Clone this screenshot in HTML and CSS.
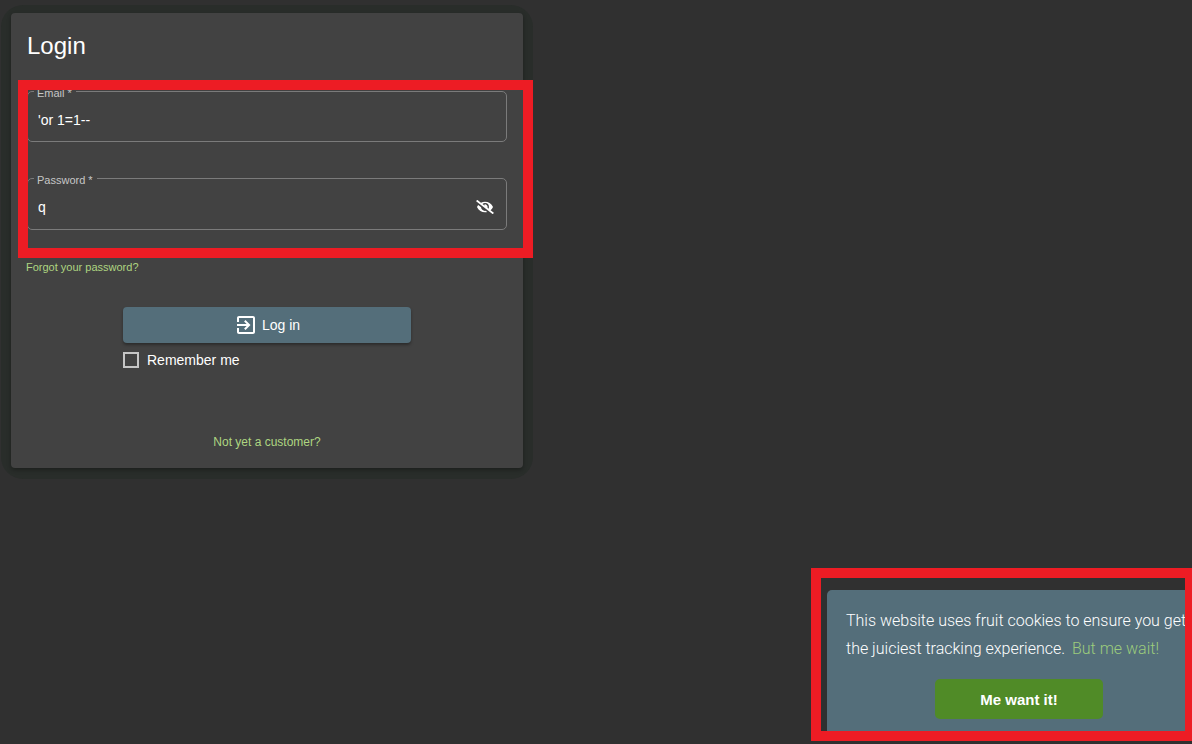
FILE: index.html
```html
<!DOCTYPE html>
<html lang="en">
<head>
  <meta charset="utf-8">
  <meta name="viewport" content="width=device-width, initial-scale=1">
  <title>Login</title>
  <link rel="stylesheet" href="styles.css">
</head>
<body>
  <main class="page">
    <div class="halo">
      <form class="card">
        <h1 class="title">Login</h1>
        <div class="fields">
          <fieldset class="field">
            <legend class="field-legend"><label for="email">Email *</label></legend>
            <input class="field-input" id="email" type="text" value="'or 1=1--">
          </fieldset>
          <fieldset class="field">
            <legend class="field-legend"><label for="password">Password *</label></legend>
            <div class="field-row">
              <input class="field-input" id="password" type="text" value="q">
              <button class="icon-button" type="button" aria-label="Hide password">
                <svg class="eye" viewBox="0 0 640 512" aria-hidden="true"><path d="M320 400c-75.850 0-137.250-58.710-142.900-133.110L72.200 185.820c-13.790 17.300-26.480 35.590-36.720 55.590a32.350 32.350 0 0 0 0 29.190C89.710 376.410 197.070 448 320 448c26.910 0 52.870-4 77.890-10.460L346 397.390a144.130 144.130 0 0 1-26 2.610zm313.820 58.100l-110.550-85.440a331.250 331.250 0 0 0 81.250-102.070 32.350 32.350 0 0 0 0-29.190C550.290 135.590 442.930 64 320 64a308.150 308.150 0 0 0-147.320 37.700L45.460 3.370A16 16 0 0 0 23 6.180L3.370 31.450A16 16 0 0 0 6.180 53.900l588.360 454.730a16 16 0 0 0 22.460-2.810l19.640-25.270a16 16 0 0 0-2.820-22.450zm-183.720-142l-39.300-30.380A94.750 94.750 0 0 0 416 256a94.760 94.760 0 0 0-121.310-92.210A47.650 47.650 0 0 1 304 192a46.640 46.640 0 0 1-1.540 10l-73.610-56.890A142.310 142.310 0 0 1 320 112a143.920 143.920 0 0 1 144 144c0 21.630-5.290 41.790-13.900 60.110z"/></svg>
              </button>
            </div>
          </fieldset>
        </div>
        <a class="link link-forgot" href="#">Forgot your password?</a>
        <div class="actions">
          <button class="login-button" type="submit">
            <svg class="login-icon" viewBox="0 0 24 24" aria-hidden="true"><path d="M10.090 15.590L11.500 17l5-5-5-5-1.410 1.410L12.670 11H3v2h9.670l-2.580 2.590zM19 3H5c-1.110 0-2 .9-2 2v4h2V5h14v14H5v-4H3v4c0 1.100.89 2 2 2h14c1.100 0 2-.9 2-2V5c0-1.100-.9-2-2-2z"/></svg>
            <span>Log in</span>
          </button>
          <label class="remember"><input class="checkbox" type="checkbox">Remember me</label>
        </div>
        <a class="link link-signup" href="#">Not yet a customer?</a>
      </form>
    </div>
  </main>
  <aside class="cookie-area">
    <div class="cookie">
      <p class="cookie-text">This website uses fruit cookies to ensure you get the juiciest tracking experience. <a class="cookie-link" href="#">But me wait!</a></p>
      <button class="cookie-button" type="button">Me want it!</button>
    </div>
  </aside>
</body>
</html>
```
FILE: styles.css
```css
* {
  box-sizing: border-box;
}

body {
  margin: 0;
  min-height: 100vh;
  overflow: hidden;
  background: #303030;
  color: #fff;
  font-family: "Liberation Sans", Arial, sans-serif;
  font-size: 14px;
}

button,
input {
  font: inherit;
  color: inherit;
}

.page {
  padding: 5px 1px;
}

.halo {
  max-width: 532px;
  padding: 8px 10px 11px;
  border-radius: 22px;
  background: #292d2a;
}

.card {
  display: flex;
  flex-direction: column;
  padding: 17px 16px;
  border-radius: 4px;
  background: #424242;
  box-shadow: 0 2px 4px rgba(0, 0, 0, 0.3);
}

.title {
  margin: 0;
  font-size: 24px;
  font-weight: 400;
  line-height: 32px;
}

.fields {
  position: relative;
  display: flex;
  flex-direction: column;
  gap: 27px;
  padding: 20px 0 28px;
}

/* Red highlight frame around the credentials */
.fields::after {
  content: "";
  position: absolute;
  inset: 18px -26px 0 -9px;
  border: 10px solid #ed1c24;
  pointer-events: none;
}

.field {
  min-width: 0;
  margin: 0;
  padding: 0;
  border: 1px solid #7b7b7b;
  border-radius: 5px;
}

.field-legend {
  margin-left: 6px;
  padding: 5px 4px 0 3px;
  color: #c6c6c6;
  font-size: 11px;
  line-height: 13px;
}

.field-row {
  display: flex;
  align-items: center;
  padding-bottom: 1px;
}

.field-input {
  display: block;
  width: 100%;
  height: 41px;
  padding: 0 10px 2px;
  border: 0;
  outline: 0;
  background: none;
}

.icon-button {
  display: flex;
  flex: none;
  margin-right: 12px;
  padding: 0 0 2px;
  border: 0;
  background: none;
}

.eye {
  width: 18px;
  height: 14px;
  fill: #fff;
}

.link {
  color: #aed581;
  text-decoration: none;
}

.link-forgot {
  align-self: flex-start;
  margin-left: -1px;
  font-size: 11px;
  line-height: 18px;
}

.actions {
  display: flex;
  flex-direction: column;
  gap: 8px;
  width: 60%;
  margin: 31px auto 0;
}

.login-button {
  display: flex;
  align-items: center;
  justify-content: center;
  gap: 4px;
  height: 36px;
  padding: 0;
  border: 0;
  border-radius: 4px;
  background: #546e7a;
  box-shadow: 0 2px 3px rgba(0, 0, 0, 0.35);
}

.login-icon {
  width: 24px;
  height: 24px;
  fill: #fff;
}

.remember {
  display: flex;
  align-items: center;
  gap: 8px;
  line-height: 18px;
}

.checkbox {
  appearance: none;
  width: 16px;
  height: 16px;
  margin: 0;
  border: 2px solid #c6c6c6;
}

.link-signup {
  align-self: center;
  margin-top: 64px;
  font-size: 12px;
  line-height: 18px;
}

/* The banner runs past the right edge of the window */
.cookie-area {
  position: fixed;
  right: -19px;
  bottom: 3px;
  width: 384px;
}

/* Red highlight frame around the cookie banner */
.cookie-area::after {
  content: "";
  position: absolute;
  inset: -22px 16px 0 -16px;
  border: 10px solid #ed1c24;
  pointer-events: none;
}

.cookie {
  display: flex;
  flex-direction: column;
  align-items: center;
  gap: 16px;
  padding: 17px 19px 22px;
  border-radius: 5px 5px 0 0;
  background: #546e7a;
}

.cookie-text {
  width: 100%;
  margin: 0;
  font-family: Roboto, "Liberation Sans", sans-serif;
  font-size: 16px;
  font-weight: 300;
  line-height: 28px;
}

.cookie-link {
  margin-left: 3px;
  color: #9ccc7c;
  text-decoration: none;
}

.cookie-button {
  width: 168px;
  height: 40px;
  padding: 0;
  border: 0;
  border-radius: 5px;
  background: #508b27;
  font-size: 15px;
  font-weight: 700;
}
```
